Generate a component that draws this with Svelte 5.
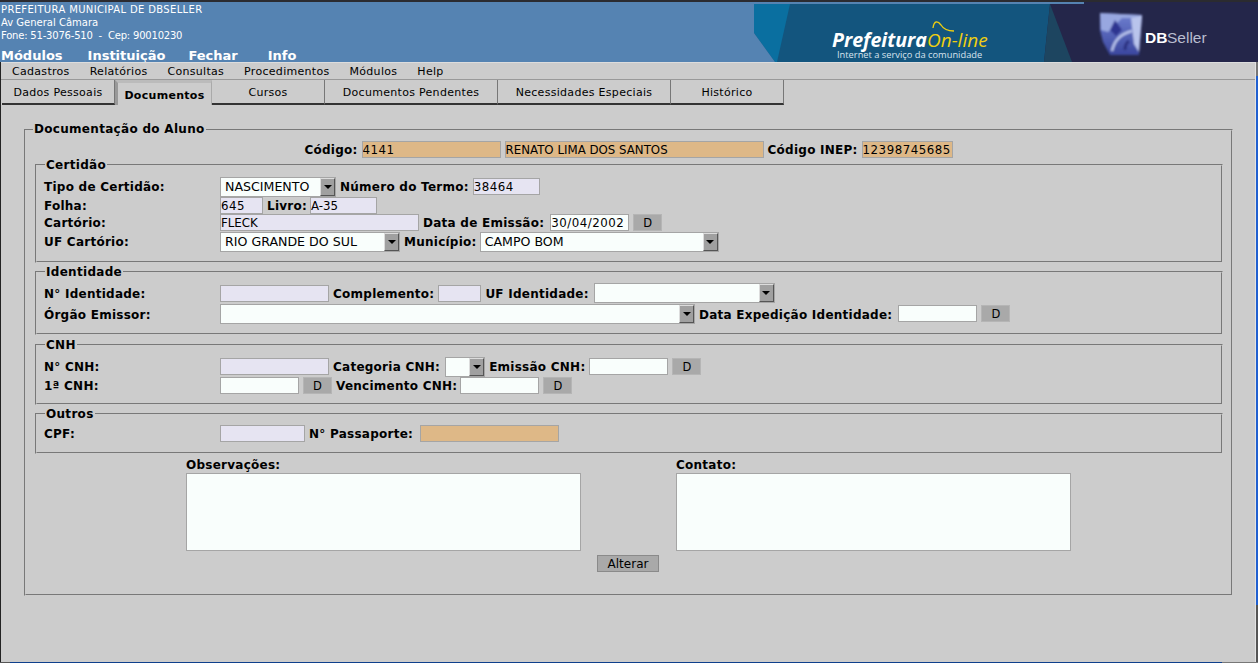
<script lang="ts">
    const menus = ["Cadastros", "Relatórios", "Consultas", "Procedimentos", "Módulos", "Help"];
    const topMenus = ["Módulos", "Instituição", "Fechar", "Info"];
    const tabs = [
        { label: "Dados Pessoais", width: 113 },
        { label: "Documentos", width: 97, active: true },
        { label: "Cursos", width: 113 },
        { label: "Documentos Pendentes", width: 173 },
        { label: "Necessidades Especiais", width: 173 },
        { label: "Histórico", width: 113 },
    ];
</script>

{#snippet combo(value: string, width: number)}
    <div class="combo" style="width: {width}px">
        <span class="combo-value">{value}</span>
        <span class="combo-arrow"><i></i></span>
    </div>
{/snippet}

{#snippet field(value: string, width: number, kind = "lilac")}
    <div class="field {kind}" class:digits={/^[\d/]+$/.test(value)} style="width: {width}px">{value}</div>
{/snippet}

<div class="page">
    <header class="top">
        <div class="top-left">
            <div class="inst">
                <div class="caps">PREFEITURA MUNICIPAL DE DBSELLER</div>
                <div>Av General Câmara</div>
                <div class="fone">Fone: 51-3076-510 &nbsp;-&nbsp; Cep: 90010230</div>
            </div>
            <nav class="top-menu">
                {#each topMenus as m}
                    <span>{m}</span>
                {/each}
            </nav>
        </div>
        <svg class="banner" width="504" height="62" viewBox="754 0 504 62">
            <defs>
                <filter id="soft"><feGaussianBlur stdDeviation="0.9" /></filter>
                <linearGradient id="cube" x1="0" y1="0" x2="0" y2="1">
                    <stop offset="0" stop-color="#6f80d0" />
                    <stop offset="1" stop-color="#3b479f" />
                </linearGradient>
            </defs>
            <rect x="754" y="0" width="504" height="62" fill="#24264a" />
            <rect x="754" y="0" width="504" height="2" fill="#2b2b30" />
            <rect x="754" y="2" width="330" height="2" fill="#5583b2" />
            <polygon points="754,4 1050,4 1044,62 754,62" fill="#13557e" />
            <polygon points="754,4 790,4 777,62 775,62 754,33" fill="#0a6fa0" />
            <polygon points="754,33 775,62 754,62" fill="#5583b2" />
            <polygon points="1050,4 1072,62 1044,62" fill="#1d4560" />
            <text x="832" y="47" class="pref">Prefeitura</text>
            <text x="927" y="47" class="online">On-line</text>
            <path d="M933 28 C934 20 938 21 941 25 C944 30 948 31 954 31" fill="none" stroke="#f0cf10" stroke-width="1.3" />
            <text x="837" y="58" class="slogan">Internet a serviço da comunidade</text>
            <g filter="url(#soft)">
                <polygon points="1100,13 1142,15 1139,55 1110,55 1103,42 1100,30" fill="url(#cube)" />
                <polygon points="1100,13 1142,15 1142,18 1122,18 1108,32 1101,30" fill="#98a7e0" />
                <polygon points="1115,20 1122,30 1116,36 1110,30" fill="#2e3590" />
                <polygon points="1131,18 1142,16 1139,52 1134,44" fill="#b9c4ec" />
                <path d="M1112 51 C1114 41 1120 34 1132 31" fill="none" stroke="#b9c4ec" stroke-width="2.5" />
                <path d="M1125 50 C1125 46 1126 43 1129 41" fill="none" stroke="#2a3080" stroke-width="3" />
            </g>
            <text x="1145" y="43" class="db">DB</text>
            <text x="1167" y="43" class="seller">Seller</text>
        </svg>
    </header>

    <div class="below">
        <div class="work">
            <div class="menubar">
                {#each menus as m}
                    <span>{m}</span>
                {/each}
            </div>

            <div class="tabs">
                {#each tabs as t}
                    <div class="tab" class:active={t.active} style="width: {t.width}px">{t.label}</div>
                {/each}
            </div>

            <main class="content">
                <fieldset class="outer">
                    <legend>Documentação do Aluno</legend>
                    <div class="code-row">
                        <b>Código:</b>
                        {@render field("4141", 139, "tan")}
                        {@render field("RENATO LIMA DOS SANTOS", 259, "tan")}
                        <b>Código INEP:</b>
                        {@render field("12398745685", 91, "tan")}
                    </div>

                    <fieldset class="group certidao">
                        <legend>Certidão</legend>
                        <div class="row r21">
                            <b class="lbl">Tipo de Certidão:</b>
                            {@render combo("NASCIMENTO", 116)}
                            <b>Número do Termo:</b>
                            {@render field("38464", 67)}
                        </div>
                        <div class="row r17">
                            <b class="lbl">Folha:</b>
                            {@render field("645", 43)}
                            <b class="m1">Livro:</b>
                            {@render field("A-35", 67)}
                        </div>
                        <div class="row r17">
                            <b class="lbl">Cartório:</b>
                            {@render field("FLECK", 199)}
                            <b class="p2">Data de Emissão:</b>
                            {@render field("30/04/2002", 79, "white")}
                            <button class="d">D</button>
                        </div>
                        <div class="row r21">
                            <b class="lbl">UF Cartório:</b>
                            {@render combo("RIO GRANDE DO SUL", 180)}
                            <b class="m1">Município:</b>
                            {@render combo("CAMPO BOM", 239)}
                        </div>
                    </fieldset>

                    <fieldset class="group identidade">
                        <legend>Identidade</legend>
                        <div class="row r20">
                            <b class="lbl">N° Identidade:</b>
                            {@render field("", 109)}
                            <b>Complemento:</b>
                            {@render field("", 43)}
                            <b class="p1">UF Identidade:</b>
                            {@render combo("", 181)}
                        </div>
                        <div class="row r21">
                            <b class="lbl">Órgão Emissor:</b>
                            {@render combo("", 475)}
                            <b class="p2">Data Expedição Identidade:</b>
                            {@render field("", 79, "white")}
                            <button class="d">D</button>
                        </div>
                    </fieldset>

                    <fieldset class="group cnh">
                        <legend>CNH</legend>
                        <div class="row r21">
                            <b class="lbl">N° CNH:</b>
                            {@render field("", 109)}
                            <b class="p1">Categoria CNH:</b>
                            {@render combo("", 40)}
                            <b>Emissão CNH:</b>
                            {@render field("", 79, "white")}
                            <button class="d">D</button>
                        </div>
                        <div class="row r17">
                            <b class="lbl">1ª CNH:</b>
                            {@render field("", 79, "white")}
                            <button class="d">D</button>
                            <b class="m1">Vencimento CNH:</b>
                            {@render field("", 79, "white")}
                            <button class="d">D</button>
                        </div>
                    </fieldset>

                    <fieldset class="group outros">
                        <legend>Outros</legend>
                        <div class="row r17">
                            <b class="lbl">CPF:</b>
                            {@render field("", 85)}
                            <b class="p3">N° Passaporte:</b>
                            {@render field("", 139, "tan")}
                        </div>
                    </fieldset>

                    <div class="notes">
                        <div class="note">
                            <b>Observações:</b>
                            <div class="area"></div>
                        </div>
                        <div class="note">
                            <b>Contato:</b>
                            <div class="area"></div>
                        </div>
                    </div>
                    <div class="actions"><button class="alterar">Alterar</button></div>
                </fieldset>
            </main>
        </div>
        <div class="edge"></div>
    </div>
    <div class="taskline"></div>
</div>

<style>
    :global(body) {
        margin: 0;
        background: #cccccc;
    }

    .page {
        height: 663px;
        width: 1258px;
        overflow: hidden;
        display: flex;
        flex-direction: column;
        font-family: "DejaVu Sans", sans-serif;
        font-size: 11px;
        color: #000;
        background: #cccccc;
    }

    .top {
        display: flex;
        justify-content: space-between;
        height: 62px;
        flex: none;
        background: #5583b2;
        border-top: 2px solid #2b2b30;
        box-sizing: border-box;
        color: #fff;
    }

    .top-left {
        padding-left: 1px;
    }

    .inst {
        font-size: 10px;
        line-height: 13px;
        padding-top: 1px;
    }

    .caps {
        letter-spacing: 0.35px;
    }

    .fone {
        letter-spacing: -0.2px;
    }

    .top-menu {
        display: flex;
        gap: 25px;
        font-size: 13px;
        font-weight: bold;
        line-height: 15px;
        margin-top: 6px;
    }

    .top-menu span:nth-child(3) {
        margin-left: -2px;
    }

    .top-menu span:last-child {
        margin-left: 5px;
    }

    .banner {
        display: block;
        margin-top: -2px;
        flex: none;
    }

    .pref {
        font: italic bold 19.6px "Open Sans", sans-serif;
        fill: #fff;
    }

    .online {
        font: italic 19px "Open Sans", sans-serif;
        fill: #f0cf10;
    }

    .slogan {
        font: 9.3px "Open Sans", sans-serif;
        fill: #d8e4ee;
    }

    .db {
        font: bold 15.5px "Liberation Sans", sans-serif;
        fill: #fff;
    }

    .seller {
        font: 15.5px "Liberation Sans", sans-serif;
        fill: #b9bdd0;
    }

    .below {
        flex: 1;
        display: flex;
        min-height: 0;
    }

    .work {
        flex: 1;
        min-width: 0;
        border-left: 1px solid #222;
        border-right: 1px solid #e2e2e2;
    }

    .edge {
        width: 2px;
        flex: none;
        background: linear-gradient(
            #777 0 14px,
            #1f5fd0 14px 543px,
            #555 543px 100%
        );
    }

    .menubar {
        display: flex;
        gap: 20px;
        height: 18px;
        align-items: center;
        padding-left: 11px;
        border-top: 1px solid #ddd;
        border-bottom: 1px solid #999;
        box-sizing: border-box;
        letter-spacing: 0.3px;
    }

    .tabs {
        display: flex;
        height: 25px;
        padding-left: 1px;
    }

    .tab {
        display: flex;
        align-items: center;
        justify-content: center;
        box-sizing: border-box;
        height: 25px;
        padding-top: 1px;
        border-right: 1px solid #777;
        border-bottom: 2px solid #333;
        letter-spacing: 0.3px;
    }

    .tab.active {
        font-weight: bold;
        border-left: 3px solid #999;
        border-top: 3px solid #bbb;
        border-bottom: 0;
        border-right: 1px solid #aaa;
        padding: 2px 0 0;
    }

    .content {
        padding: 17px 22px 0 23px;
    }

    fieldset {
        margin: 0;
        min-width: 0;
        border: 2px groove #cccccc;
    }

    legend {
        padding: 0 1px;
        font-weight: bold;
        font-size: 12px;
        line-height: 15px;
        letter-spacing: 0.3px;
    }

    .outer {
        padding: 0 8px 0 9px;
        height: 474px;
        box-sizing: border-box;
    }

    .outer > legend {
        margin-left: -2px;
    }

    .code-row {
        display: flex;
        justify-content: center;
        align-items: center;
        gap: 4px;
        height: 17px;
        margin-top: 4px;
        padding-right: 1px;
    }

    .group {
        padding: 4px 7px 0;
        box-sizing: border-box;
    }

    .group > legend {
        margin-left: 1px;
        transform: translateY(1px);
    }

    .certidao {
        height: 106px;
        margin-top: -1px;
    }

    .identidade {
        height: 71px;
        margin-top: 1px;
    }

    .identidade .row b {
        padding-top: 2px;
    }

    .cnh {
        height: 68px;
        margin-top: 2px;
    }

    .outros {
        height: 48px;
        margin-top: 1px;
    }

    .row {
        display: flex;
        align-items: center;
        gap: 4px;
    }

    .row b,
    .code-row b,
    .note b {
        white-space: nowrap;
        font-size: 12px;
        letter-spacing: 0.25px;
    }

    .r21 {
        height: 21px;
    }

    .r20 {
        height: 20px;
    }

    .r17 {
        height: 17px;
    }

    .row b.lbl {
        width: 176px;
        margin-right: -4px;
        flex: none;
    }

    .row b.p1 {
        margin-right: 1px;
    }

    .row b.p2 {
        margin-right: 2px;
    }

    .row b.p3 {
        margin-right: 3px;
    }

    .row b.m1 {
        margin-right: -1px;
    }

    .field {
        height: 17px;
        box-sizing: border-box;
        border: 1px solid #a5a5a5;
        line-height: 16px;
        font-size: 11.8px;
        padding-left: 0;
        flex: none;
        overflow: hidden;
        white-space: nowrap;
    }

    .digits {
        letter-spacing: 0.5px;
    }

    .lilac {
        background: #e6e4f2;
    }

    .tan {
        background: #deb887;
    }

    .white {
        background: #f9fefc;
    }

    .combo {
        height: 20px;
        display: flex;
        flex: none;
        box-sizing: border-box;
        background: #f9fefc;
        border: 1px solid #a5a5a5;
        font-size: 12.6px;
    }

    .combo-value {
        flex: 1;
        padding-left: 4px;
        line-height: 18px;
        white-space: nowrap;
    }

    .combo-arrow {
        width: 15px;
        background: #a0a0a0;
        border-top: 1px solid #dcdcdc;
        border-left: 1px solid #dcdcdc;
        border-right: 1px solid #555;
        border-bottom: 1px solid #555;
        box-sizing: border-box;
        display: flex;
        align-items: center;
        justify-content: center;
    }

    .combo-arrow i {
        width: 0;
        height: 0;
        border-left: 4px solid transparent;
        border-right: 4px solid transparent;
        border-top: 4px solid #000;
    }

    button {
        font-family: inherit;
        background: #a9a9a9;
        border: 1px solid #b5b5b5;
        padding: 0;
        color: #000;
        font-size: 11.5px;
        flex: none;
    }

    .d {
        width: 29px;
        height: 17px;
    }

    .notes {
        display: flex;
        padding-left: 151px;
        gap: 95px;
        margin-top: 4px;
    }

    .note {
        display: flex;
        flex-direction: column;
        width: 395px;
    }

    .note b {
        line-height: 15px;
        height: 15px;
    }

    .area {
        height: 78px;
        box-sizing: border-box;
        background: #f9fefc;
        border: 1px solid #a5a5a5;
    }

    .actions {
        display: flex;
        justify-content: center;
        margin-top: 4px;
        padding-right: 2px;
    }

    .alterar {
        width: 62px;
        height: 17px;
        font-size: 12px;
        line-height: 15px;
        padding-top: 1px;
        border-color: #8a8a8a;
    }

    .taskline {
        height: 1px;
        flex: none;
        background: linear-gradient(
            to right,
            #555 0 10px,
            #0e3f8c 10px 1222px,
            #777 1222px 100%
        );
    }
</style>
